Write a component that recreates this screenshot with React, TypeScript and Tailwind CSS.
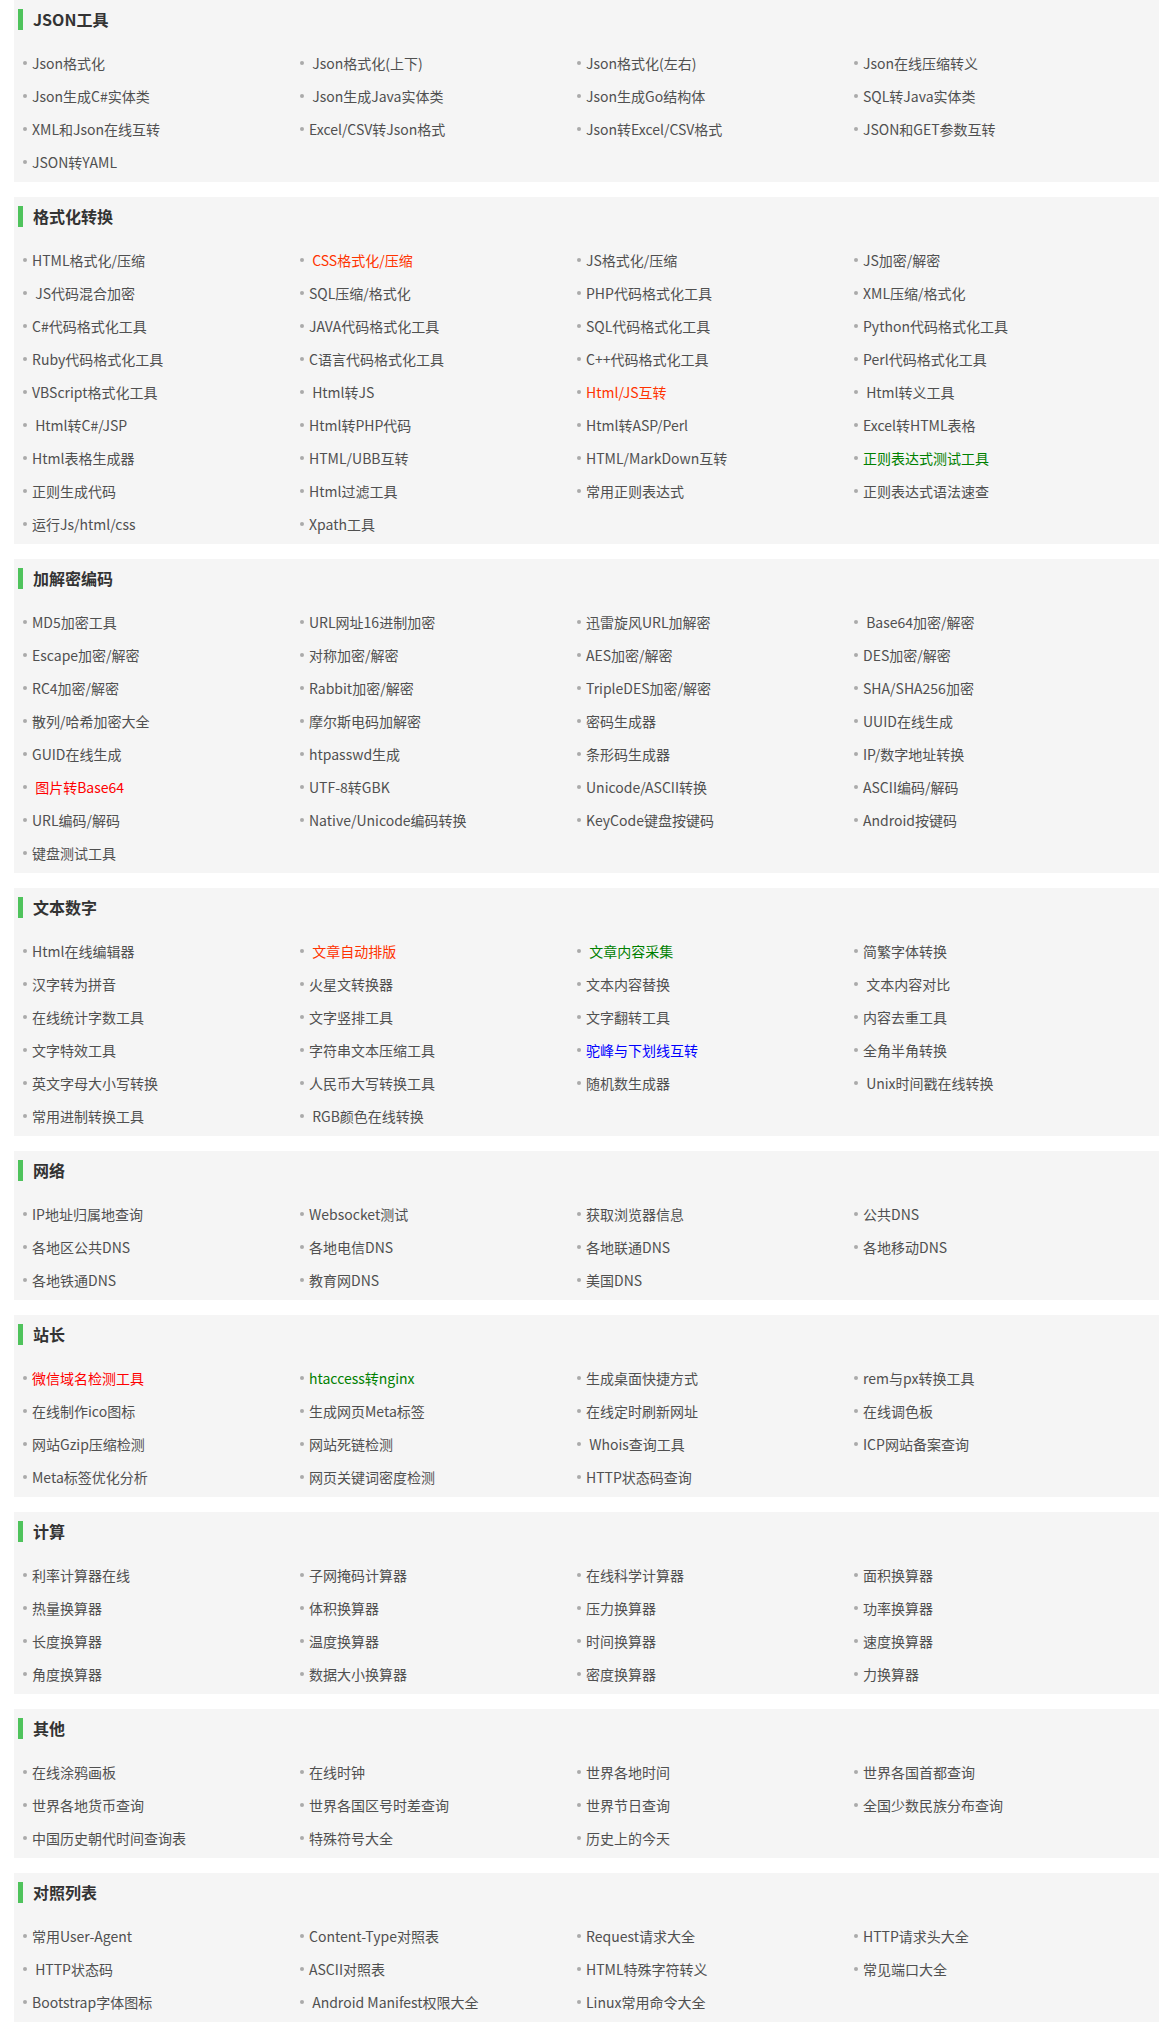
import React from "react";

type Item = { t: string; c?: string };

const R1 = "#ff3300";
const R2 = "#ff0000";
const G = "#008000";
const B = "#0000ff";

const sections: { title: string; items: Item[] }[] = [
  {
    title: "JSON工具",
    items: [
      { t: "Json格式化" },
      { t: " Json格式化(上下)" },
      { t: "Json格式化(左右)" },
      { t: "Json在线压缩转义" },
      { t: "Json生成C#实体类" },
      { t: " Json生成Java实体类" },
      { t: "Json生成Go结构体" },
      { t: "SQL转Java实体类" },
      { t: "XML和Json在线互转" },
      { t: "Excel/CSV转Json格式" },
      { t: "Json转Excel/CSV格式" },
      { t: "JSON和GET参数互转" },
      { t: "JSON转YAML" },
    ],
  },
  {
    title: "格式化转换",
    items: [
      { t: "HTML格式化/压缩" },
      { t: " CSS格式化/压缩", c: R1 },
      { t: "JS格式化/压缩" },
      { t: "JS加密/解密" },
      { t: " JS代码混合加密" },
      { t: "SQL压缩/格式化" },
      { t: "PHP代码格式化工具" },
      { t: "XML压缩/格式化" },
      { t: "C#代码格式化工具" },
      { t: "JAVA代码格式化工具" },
      { t: "SQL代码格式化工具" },
      { t: "Python代码格式化工具" },
      { t: "Ruby代码格式化工具" },
      { t: "C语言代码格式化工具" },
      { t: "C++代码格式化工具" },
      { t: "Perl代码格式化工具" },
      { t: "VBScript格式化工具" },
      { t: " Html转JS" },
      { t: "Html/JS互转", c: R1 },
      { t: " Html转义工具" },
      { t: " Html转C#/JSP" },
      { t: "Html转PHP代码" },
      { t: "Html转ASP/Perl" },
      { t: "Excel转HTML表格" },
      { t: "Html表格生成器" },
      { t: "HTML/UBB互转" },
      { t: "HTML/MarkDown互转" },
      { t: "正则表达式测试工具", c: G },
      { t: "正则生成代码" },
      { t: "Html过滤工具" },
      { t: "常用正则表达式" },
      { t: "正则表达式语法速查" },
      { t: "运行Js/html/css" },
      { t: "Xpath工具" },
    ],
  },
  {
    title: "加解密编码",
    items: [
      { t: "MD5加密工具" },
      { t: "URL网址16进制加密" },
      { t: "迅雷旋风URL加解密" },
      { t: " Base64加密/解密" },
      { t: "Escape加密/解密" },
      { t: "对称加密/解密" },
      { t: "AES加密/解密" },
      { t: "DES加密/解密" },
      { t: "RC4加密/解密" },
      { t: "Rabbit加密/解密" },
      { t: "TripleDES加密/解密" },
      { t: "SHA/SHA256加密" },
      { t: "散列/哈希加密大全" },
      { t: "摩尔斯电码加解密" },
      { t: "密码生成器" },
      { t: "UUID在线生成" },
      { t: "GUID在线生成" },
      { t: "htpasswd生成" },
      { t: "条形码生成器" },
      { t: "IP/数字地址转换" },
      { t: " 图片转Base64", c: R2 },
      { t: "UTF-8转GBK" },
      { t: "Unicode/ASCII转换" },
      { t: "ASCII编码/解码" },
      { t: "URL编码/解码" },
      { t: "Native/Unicode编码转换" },
      { t: "KeyCode键盘按键码" },
      { t: "Android按键码" },
      { t: "键盘测试工具" },
    ],
  },
  {
    title: "文本数字",
    items: [
      { t: "Html在线编辑器" },
      { t: " 文章自动排版", c: R1 },
      { t: " 文章内容采集", c: G },
      { t: "简繁字体转换" },
      { t: "汉字转为拼音" },
      { t: "火星文转换器" },
      { t: "文本内容替换" },
      { t: " 文本内容对比" },
      { t: "在线统计字数工具" },
      { t: "文字竖排工具" },
      { t: "文字翻转工具" },
      { t: "内容去重工具" },
      { t: "文字特效工具" },
      { t: "字符串文本压缩工具" },
      { t: "驼峰与下划线互转", c: B },
      { t: "全角半角转换" },
      { t: "英文字母大小写转换" },
      { t: "人民币大写转换工具" },
      { t: "随机数生成器" },
      { t: " Unix时间戳在线转换" },
      { t: "常用进制转换工具" },
      { t: " RGB颜色在线转换" },
    ],
  },
  {
    title: "网络",
    items: [
      { t: "IP地址归属地查询" },
      { t: "Websocket测试" },
      { t: "获取浏览器信息" },
      { t: "公共DNS" },
      { t: "各地区公共DNS" },
      { t: "各地电信DNS" },
      { t: "各地联通DNS" },
      { t: "各地移动DNS" },
      { t: "各地铁通DNS" },
      { t: "教育网DNS" },
      { t: "美国DNS" },
    ],
  },
  {
    title: "站长",
    items: [
      { t: "微信域名检测工具", c: R2 },
      { t: "htaccess转nginx", c: G },
      { t: "生成桌面快捷方式" },
      { t: "rem与px转换工具" },
      { t: "在线制作ico图标" },
      { t: "生成网页Meta标签" },
      { t: "在线定时刷新网址" },
      { t: "在线调色板" },
      { t: "网站Gzip压缩检测" },
      { t: "网站死链检测" },
      { t: " Whois查询工具" },
      { t: "ICP网站备案查询" },
      { t: "Meta标签优化分析" },
      { t: "网页关键词密度检测" },
      { t: "HTTP状态码查询" },
    ],
  },
  {
    title: "计算",
    items: [
      { t: "利率计算器在线" },
      { t: "子网掩码计算器" },
      { t: "在线科学计算器" },
      { t: "面积换算器" },
      { t: "热量换算器" },
      { t: "体积换算器" },
      { t: "压力换算器" },
      { t: "功率换算器" },
      { t: "长度换算器" },
      { t: "温度换算器" },
      { t: "时间换算器" },
      { t: "速度换算器" },
      { t: "角度换算器" },
      { t: "数据大小换算器" },
      { t: "密度换算器" },
      { t: "力换算器" },
    ],
  },
  {
    title: "其他",
    items: [
      { t: "在线涂鸦画板" },
      { t: "在线时钟" },
      { t: "世界各地时间" },
      { t: "世界各国首都查询" },
      { t: "世界各地货币查询" },
      { t: "世界各国区号时差查询" },
      { t: "世界节日查询" },
      { t: "全国少数民族分布查询" },
      { t: "中国历史朝代时间查询表" },
      { t: "特殊符号大全" },
      { t: "历史上的今天" },
    ],
  },
  {
    title: "对照列表",
    items: [
      { t: "常用User-Agent" },
      { t: "Content-Type对照表" },
      { t: "Request请求大全" },
      { t: "HTTP请求头大全" },
      { t: " HTTP状态码" },
      { t: "ASCII对照表" },
      { t: "HTML特殊字符转义" },
      { t: "常见端口大全" },
      { t: "Bootstrap字体图标" },
      { t: " Android Manifest权限大全" },
      { t: "Linux常用命令大全" },
    ],
  },
];

export default function App() {
  return (
    <div className="w-[1171px] bg-white font-['Noto_Sans_CJK_SC','Microsoft_YaHei',sans-serif] pb-[6px]">
      <div className="ml-[14px] w-[1145px] flex flex-col gap-[15px]">
        {sections.map((s) => (
          <section key={s.title} className="bg-[#f5f5f5] pt-[9px] pb-[4px]">
            <h2 className="ml-[4px] h-[21px] border-l-[5px] border-[#4fc35c] pl-[10px] text-[16px] leading-[21px] font-bold text-[#333]">
              {s.title}
            </h2>
            <ul className="mt-[16px] pl-[9px] grid grid-cols-[repeat(4,277px)]">
              {s.items.map((it, i) => (
                <li key={i} className="h-[33px] flex items-center">
                  <span className="w-[4px] h-[4px] rounded-full bg-[#aaa] shrink-0" />
                  <a
                    className="ml-[5px] whitespace-pre text-[14px] leading-[20px]"
                    style={{ color: it.c ?? "#505050" }}
                  >
                    {it.t}
                  </a>
                </li>
              ))}
            </ul>
          </section>
        ))}
      </div>
    </div>
  );
}
